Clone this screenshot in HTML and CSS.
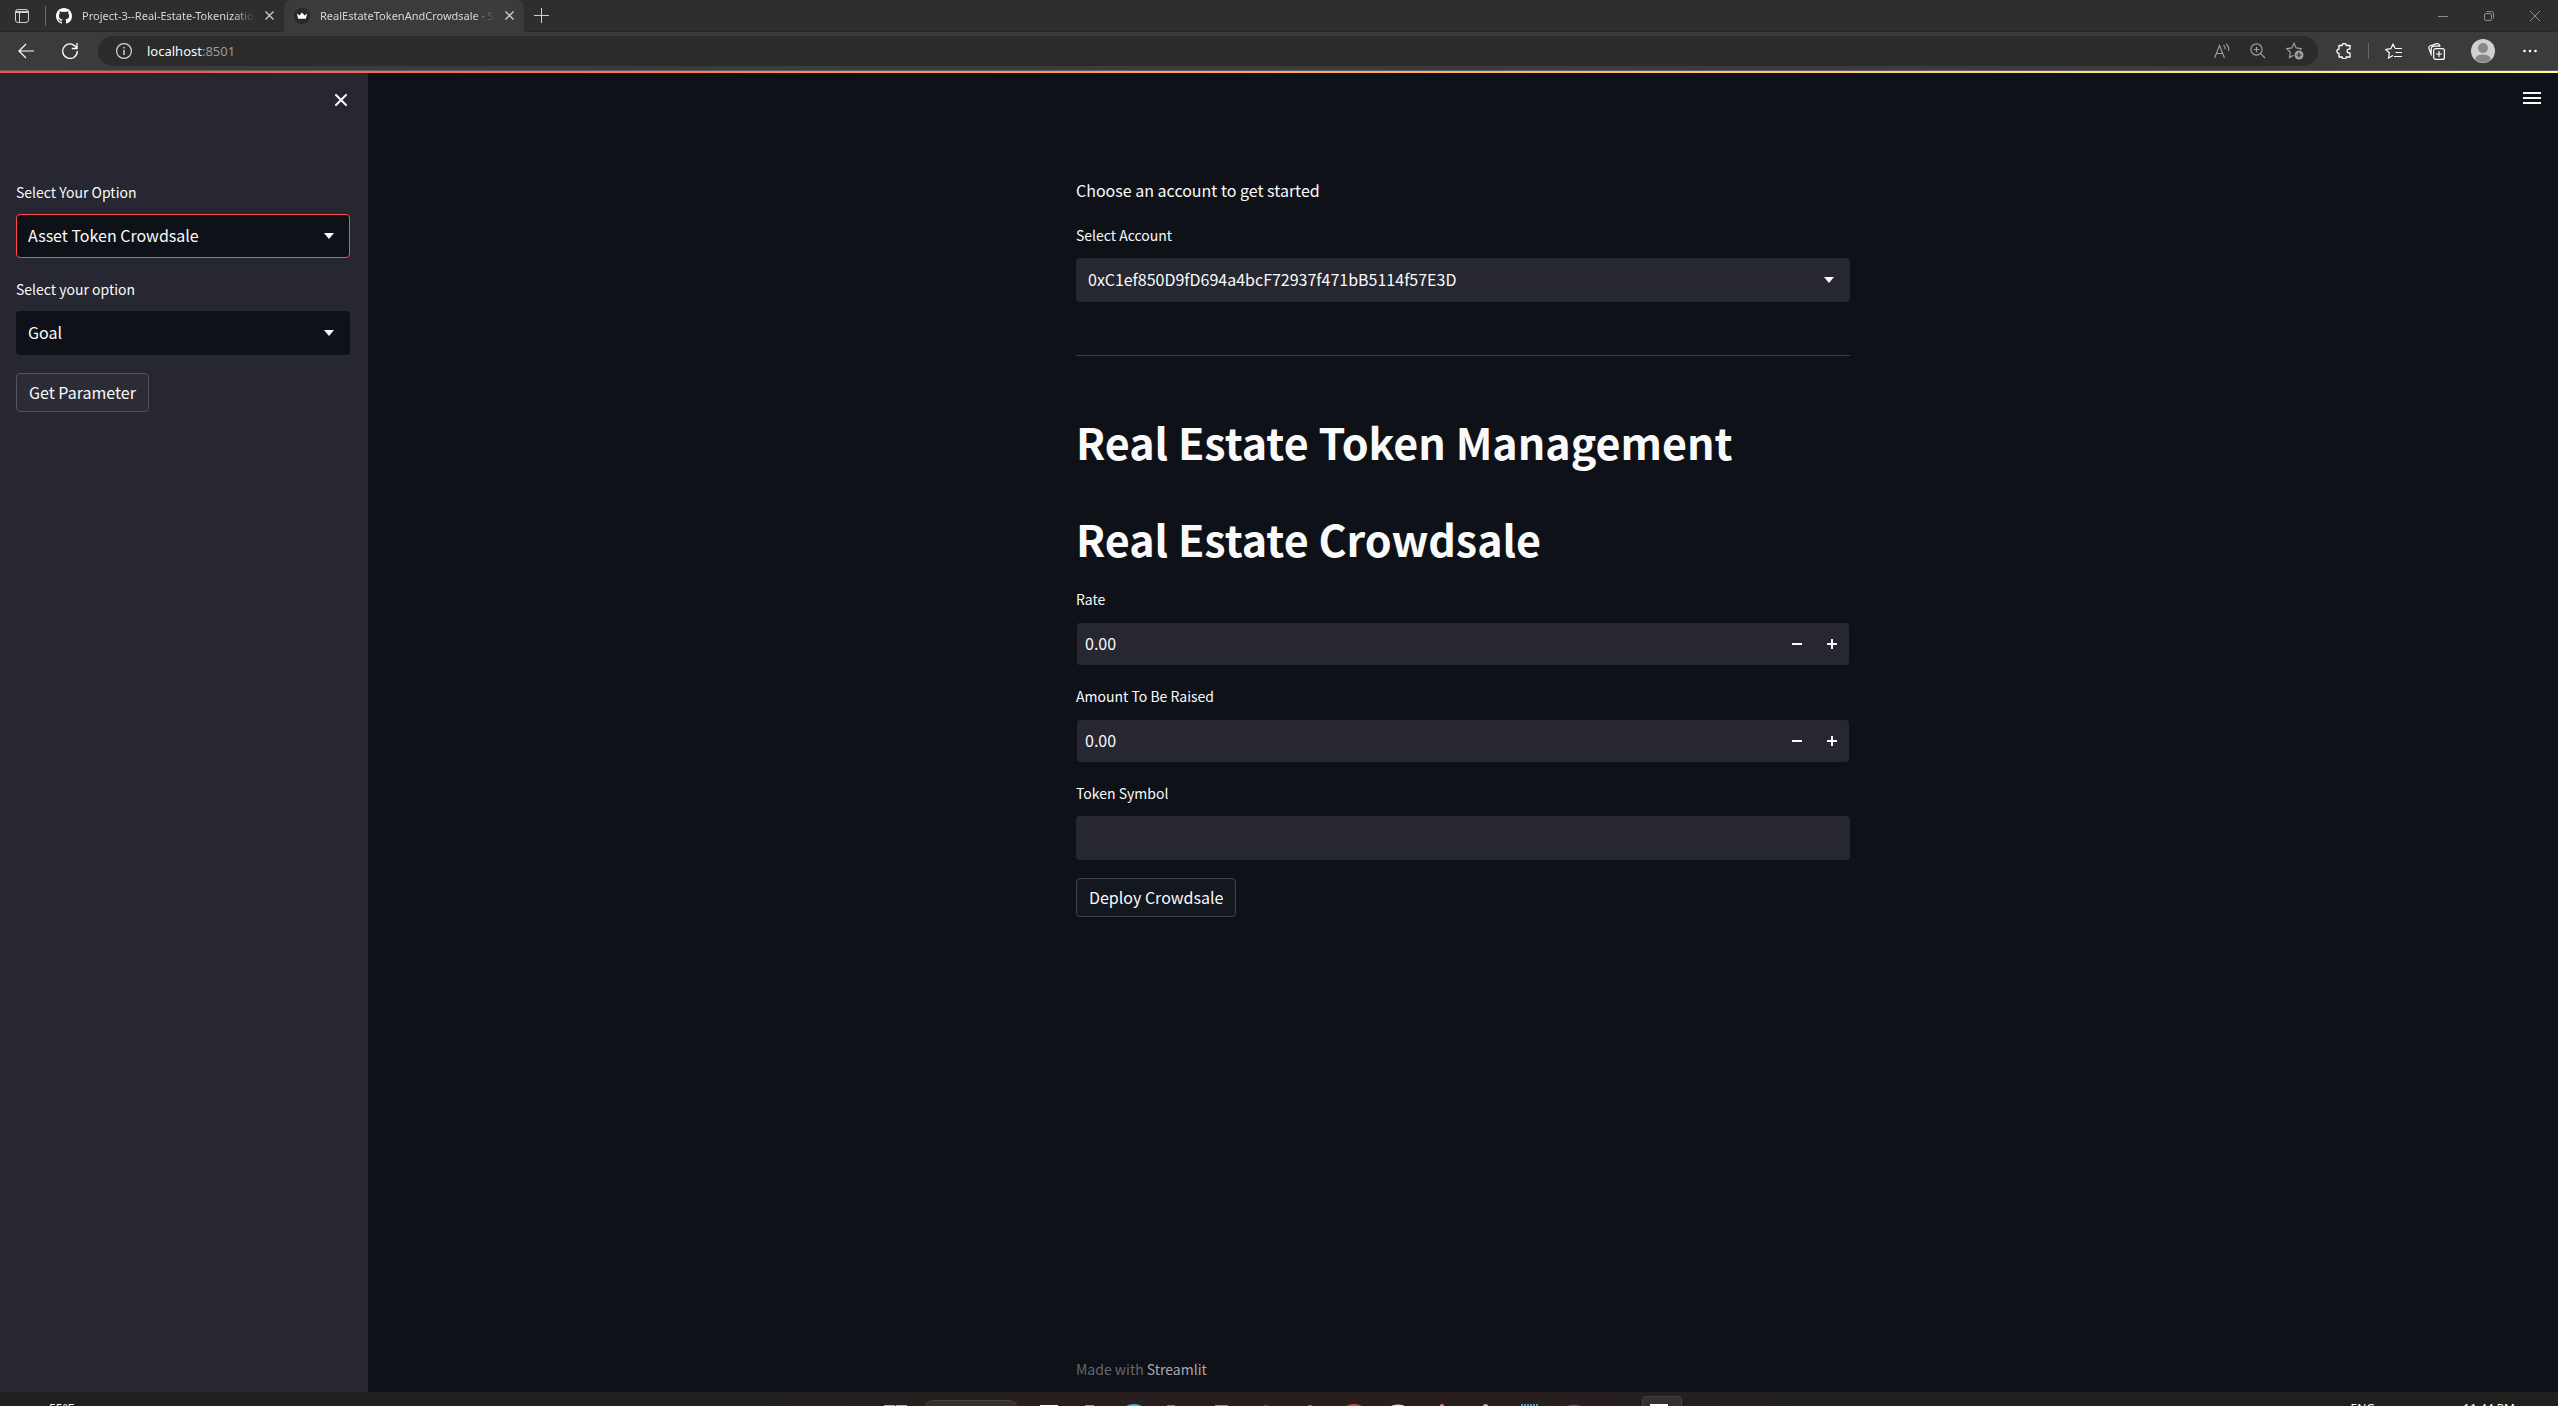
FILE: index.html
```html
<!DOCTYPE html>
<html lang="en">
<head>
<meta charset="utf-8">
<title>RealEstateTokenAndCrowdsale · Streamlit</title>
<link rel="stylesheet" href="styles.css">
</head>
<body>
<header class="browser">
  <div class="tabstrip">
    <button class="chrome-btn tab-actions" aria-label="Tab actions menu">
      <svg width="14" height="14" viewBox="0 0 14 14" fill="none" stroke="#d0d0d0"><rect x=".5" y=".5" width="13" height="13" rx="2.5"/><path d="M1 2.500h12M1 3.500h12M4.500 4v9.500"/></svg>
    </button>
    <div class="tab">
      <svg width="16" height="16" viewBox="0 0 16 16" fill="#fff"><path d="M8 0C3.580 0 0 3.580 0 8c0 3.540 2.290 6.530 5.470 7.590.4.070.55-.17.55-.38 0-.19-.01-.82-.01-1.490-2.010.37-2.530-.49-2.690-.94-.09-.23-.48-.94-.82-1.130-.28-.15-.68-.52-.01-.53.63-.01 1.080.58 1.230.82.72 1.210 1.870.87 2.330.66.070-.52.28-.87.51-1.070-1.780-.2-3.640-.89-3.640-3.950 0-.87.31-1.590.82-2.150-.08-.2-.36-1.020.08-2.120 0 0 .67-.21 2.200.82.64-.18 1.320-.27 2-.27s1.360.09 2 .27c1.530-1.040 2.200-.82 2.200-.82.44 1.100.16 1.920.08 2.120.51.56.82 1.270.82 2.150 0 3.070-1.870 3.750-3.650 3.950.29.25.54.73.54 1.480 0 1.070-.01 1.930-.01 2.200 0 .21.15.46.55.38A8.010 8.010 0 0 0 16 8c0-4.420-3.580-8-8-8z"/></svg>
      <span class="tab-title">Project-3--Real-Estate-Tokenization</span>
      <button class="chrome-btn" aria-label="Close tab"><svg width="9" height="9" viewBox="0 0 9 9" stroke="#d0d0d0" stroke-width="1.300"><path d="M.5.5l8 8M8.500.5l-8 8"/></svg></button>
    </div>
    <div class="tab tab-active">
      <svg width="16" height="16" viewBox="0 0 16 16"><circle cx="8" cy="8" r="8" fill="#262730"/><path d="M2.800 5.500l2.700 2L8 4.500l2.500 3 2.700-2-1.400 5.300H4.200z" fill="#fff"/></svg>
      <span class="tab-title">RealEstateTokenAndCrowdsale · Streamlit</span>
      <button class="chrome-btn" aria-label="Close tab"><svg width="9" height="9" viewBox="0 0 9 9" stroke="#d0d0d0" stroke-width="1.300"><path d="M.5.5l8 8M8.500.5l-8 8"/></svg></button>
    </div>
    <button class="chrome-btn new-tab" aria-label="New tab"><svg width="15" height="15" viewBox="0 0 15 15" stroke="#d0d0d0"><path d="M7.500 0v15M0 7.500h15"/></svg></button>
    <div class="window-controls">
      <button class="chrome-btn" aria-label="Minimize"><svg width="10" height="10" viewBox="0 0 10 10" stroke="#8c8c8c"><path d="M0 5.500h10"/></svg></button>
      <button class="chrome-btn" aria-label="Restore"><svg width="10" height="10" viewBox="0 0 10 10" fill="none" stroke="#8c8c8c"><rect x=".5" y="2.500" width="7" height="7" rx="1.500"/><path d="M2.500.5h5a2 2 0 0 1 2 2v5"/></svg></button>
      <button class="chrome-btn" aria-label="Close"><svg width="10" height="10" viewBox="0 0 10 10" stroke="#8c8c8c"><path d="M0 0l10 10M10 0L0 10"/></svg></button>
    </div>
  </div>
  <div class="toolbar">
    <button class="chrome-btn back" aria-label="Back"><svg width="16" height="16" viewBox="0 0 16 16" fill="none" stroke="#fff" stroke-width="1.200"><path d="M16 8H1M8 1L1 8l7 7"/></svg></button>
    <button class="chrome-btn reload" aria-label="Refresh"><svg width="16" height="16" viewBox="0 0 16 16" fill="none" stroke="#fff" stroke-width="1.300"><path d="M14.800 5.500A7.300 7.300 0 1 0 15.300 8M15 0v5.500H9.800"/></svg></button>
    <div class="address">
      <svg width="16" height="16" viewBox="0 0 16 16" fill="none" stroke="#d8d8d8"><circle cx="8" cy="8" r="7.400" stroke-width="1.200"/><path d="M8 7v5M8 4v1.600" stroke-width="1.400"/></svg>
      <span class="url">localhost<span class="port">:8501</span></span>
      <div class="address-actions">
        <svg width="16" height="16" viewBox="0 0 16 16" fill="none" stroke="#a0a0a0" stroke-width="1.100"><path d="M.6 15L5.500 2.500l5 12.500M2.300 10.500h6.500M9.500 2.200q2 1.500 1.500 4M12 .6q3.500 3 2.500 7"/></svg>
        <svg width="16" height="16" viewBox="0 0 16 16" fill="none" stroke="#a0a0a0" stroke-width="1.200"><circle cx="6.500" cy="6.500" r="5.600"/><path d="M10.700 10.700L15 15M3.700 6.500h5.600M6.500 3.700v5.600"/></svg>
        <svg width="18" height="18" viewBox="0 0 18 18" fill="none" stroke="#a0a0a0" stroke-width="1.200"><path d="M7.500 13.200L3.500 15.500l.8-5.200L.8 6.600l5-.7L8 1.300l2.200 4.600 5 .7-1.200 1.300"/><circle cx="13" cy="13" r="4.500" fill="#a0a0a0" stroke="none"/><path d="M13 10.500v5M10.500 13h5" stroke="#2b2b2b"/></svg>
      </div>
    </div>
    <div class="toolbar-actions">
      <button class="chrome-btn" aria-label="Extensions"><svg width="16" height="16" viewBox="0 0 16 16" fill="none" stroke="#fff" stroke-width="1.300" stroke-linejoin="round"><path d="M3 2.500h3.200a2 2 0 0 1 4 0h3.800v3.600h-1a1.900 1.900 0 0 0 0 3.800h1V14h-3.800a2 2 0 0 1-4 0H3v-3.600a2.100 2.100 0 0 1 0-4.200z"/></svg></button>
      <span class="divider"></span>
      <button class="chrome-btn" aria-label="Favorites"><svg width="17" height="16" viewBox="0 0 17 16" fill="none" stroke="#fff" stroke-width="1.200"><path d="M8 12.500L3.500 15l.9-5L.8 6.500l5-.8L8 1.200l2 4M10 5.500h7M10.500 9.500H17M9 13.500h8"/></svg></button>
      <button class="chrome-btn" aria-label="Collections"><svg width="17" height="17" viewBox="0 0 17 17" fill="none" stroke="#fff" stroke-width="1.200"><rect x="5.700" y="5.700" width="10.700" height="10.700" rx="2"/><path d="M11 8v6M8 11h6M3.500 12.500L1 5.500q-.6-2 1.300-2.700l6.500-2.100q1.800-.4 2.600 1.200l.8 1.500M3.200 10.500V6q0-2.800 2.800-2.800h6"/></svg></button>
      <button class="chrome-btn" aria-label="Profile"><svg width="24" height="24" viewBox="0 0 24 24"><circle cx="12" cy="12" r="12" fill="#d2d0ce"/><circle cx="12" cy="9" r="5" fill="#8a8886"/><path d="M4 20.500q1-5 8-5t8 5A12 12 0 0 1 4 20.500z" fill="#8a8886"/></svg></button>
      <button class="chrome-btn more" aria-label="Settings and more"><svg width="14" height="4" viewBox="0 0 14 4" fill="#fff"><circle cx="1.500" cy="2" r="1.300"/><circle cx="7" cy="2" r="1.300"/><circle cx="12.500" cy="2" r="1.300"/></svg></button>
    </div>
  </div>
</header>

<div class="app">
  <div class="decoration"></div>
  <aside class="sidebar">
    <button class="icon-btn close-sidebar" aria-label="Close sidebar"><svg width="12" height="12" viewBox="0 0 12 12" fill="none" stroke="#fafafa" stroke-width="2" stroke-linecap="round"><path d="M1 1l10 10M11 1L1 11"/></svg></button>
    <div class="field">
      <label for="page">Select Your Option</label>
      <div class="select focused">
        <select id="page"><option>Asset Token Crowdsale</option></select>
        <svg width="10" height="6" viewBox="0 0 10 6" fill="#fafafa"><path d="M0 0h10L5 6z"/></svg>
      </div>
    </div>
    <div class="field">
      <label for="param">Select your option</label>
      <div class="select">
        <select id="param"><option>Goal</option></select>
        <svg width="10" height="6" viewBox="0 0 10 6" fill="#fafafa"><path d="M0 0h10L5 6z"/></svg>
      </div>
    </div>
    <button class="btn">Get Parameter</button>
  </aside>

  <main class="main">
    <button class="icon-btn app-menu" aria-label="Main menu"><svg width="18" height="12" viewBox="0 0 18 12" fill="#fafafa"><path d="M0 0h18v2H0zM0 5h18v2H0zM0 10h18v2H0z"/></svg></button>
    <div class="column">
      <p class="intro">Choose an account to get started</p>
      <div class="field">
        <label for="account">Select Account</label>
        <div class="select">
          <select id="account"><option>0xC1ef850D9fD694a4bcF72937f471bB5114f57E3D</option></select>
          <svg width="10" height="6" viewBox="0 0 10 6" fill="#fafafa"><path d="M0 0h10L5 6z"/></svg>
        </div>
      </div>
      <hr>
      <h1>Real Estate Token Management</h1>
      <h1>Real Estate Crowdsale</h1>
      <div class="field">
        <label for="rate">Rate</label>
        <div class="number">
          <input id="rate" type="text" inputmode="decimal" value="0.00">
          <button aria-label="Decrease rate"><svg width="10" height="10" viewBox="0 0 10 10" fill="#fafafa"><path d="M0 4h10v2H0z"/></svg></button>
          <button aria-label="Increase rate"><svg width="10" height="10" viewBox="0 0 10 10" fill="#fafafa"><path d="M0 4h4V0h2v4h4v2H6v4H4V6H0z"/></svg></button>
        </div>
      </div>
      <div class="field">
        <label for="amount">Amount To Be Raised</label>
        <div class="number">
          <input id="amount" type="text" inputmode="decimal" value="0.00">
          <button aria-label="Decrease amount"><svg width="10" height="10" viewBox="0 0 10 10" fill="#fafafa"><path d="M0 4h10v2H0z"/></svg></button>
          <button aria-label="Increase amount"><svg width="10" height="10" viewBox="0 0 10 10" fill="#fafafa"><path d="M0 4h4V0h2v4h4v2H6v4H4V6H0z"/></svg></button>
        </div>
      </div>
      <div class="field">
        <label for="symbol">Token Symbol</label>
        <input id="symbol" class="text" type="text">
      </div>
      <button class="btn btn-main">Deploy Crowdsale</button>
      <footer>Made with <a href="#">Streamlit</a></footer>
    </div>
  </main>
</div>

<div class="taskbar">
  <span class="weather">55°F</span>
  <svg width="806" height="14" viewBox="0 0 806 14">
    <path d="M8 13h11v1H8zM20 13h11v1H20z" fill="#6cc9ee"/>
    <path d="M49 16q1-7.500 9-7.500h74q8 0 9 7.500" fill="#352e2d" stroke="#454140"/>
    <path d="M164 13h18v1h-18z" fill="#fff"/>
    <path d="M209 13h9v1h-9z" fill="#9b86c4"/>
    <ellipse cx="258" cy="15" rx="8" ry="3" fill="#2fb9cf"/>
    <path d="M291 13h8v1h-8z" fill="#a8781c"/>
    <path d="M339 13h13v1h-13z" fill="#33b1e0"/>
    <path d="M388 13h4v1h-4z" fill="#1b5f9e"/>
    <path d="M432 13h4v1h-4z" fill="#4a82d6"/>
    <ellipse cx="478" cy="15" rx="8" ry="3" fill="#e0402f"/>
    <ellipse cx="522" cy="15" rx="7" ry="2.500" fill="#e0e0e0"/>
    <path d="M564 14v-1l1-1h2l1 1v1z" fill="#ee7268"/>
    <path d="M607 14v-1l2-1h1l2 1v1z" fill="#e0b080"/>
    <path d="M645 13h18" stroke="#3aa6cc" stroke-width="2" stroke-dasharray="2 1"/>
    <ellipse cx="698" cy="15" rx="7" ry="2.500" fill="#7a3394"/>
    <path d="M766.500 14V7.500q0-3 3-3h33q3 0 3 3V14" fill="#34302f" stroke="#45413f"/>
    <path d="M774 12h18v2h-18z" fill="#fff"/>
  </svg>
  <div class="tray">
    <span>ENG</span>
    <span class="clock">11:44 PM</span>
  </div>
</div>
</body>
</html>
```
FILE: styles.css
```css
* { box-sizing: border-box; }

body {
  margin: 0;
  height: 100vh;
  display: flex;
  flex-direction: column;
  overflow: hidden;
  background: #0e1117;
  color: #fafafa;
  font: 16px/28px "Noto Sans CJK SC", sans-serif;
}

button, input, select { font: inherit; color: inherit; margin: 0; }
svg { display: block; flex: none; }
p, h1, hr { margin: 0; }

/* Browser frame */
.browser { font-family: "Noto Sans", sans-serif; background: #3b3b3b; }
.chrome-btn { display: flex; padding: 0; border: 0; background: none; }

.tabstrip {
  display: flex;
  align-items: center;
  height: 32px;
  background: #2e2e2e;
  border-bottom: 1px solid #272727;
}
.tab-actions { padding: 0 16px 0 15px; }
.tab {
  display: flex;
  align-items: center;
  gap: 10px;
  width: 239px;
  height: 20px;
  padding: 0 10px;
  border-left: 1px solid #6e6e6e;
  font-size: 11px;
  line-height: 20px;
  color: #d6d6d6;
}
.tab-active {
  width: 240px;
  height: 32px;
  border: 0;
  border-radius: 8px 8px 0 0;
  background: #3b3b3b;
}
.tab-title {
  flex: 1;
  min-width: 0;
  overflow: hidden;
  white-space: nowrap;
  mask-image: linear-gradient(90deg, #000 88%, transparent);
}
.new-tab { padding: 0 10px; }
.window-controls { display: flex; gap: 36px; margin-left: auto; padding-right: 18px; }

.toolbar {
  display: flex;
  align-items: center;
  height: 39px;
  padding: 0 21px 0 18px;
  border-bottom: 1px solid #5c5c5c;
}
.back { padding-right: 28px; }
.reload { padding-right: 20px; }
.address {
  flex: 1;
  display: flex;
  align-items: center;
  gap: 15px;
  height: 30px;
  padding: 0 14px 0 18px;
  border-radius: 15px;
  background: #2b2b2b;
  font-size: 13px;
  line-height: 20px;
}
.port { color: #9a9a9a; }
.address-actions { display: flex; align-items: center; gap: 20px; margin-left: auto; }
.toolbar-actions { display: flex; align-items: center; gap: 26px; padding-left: 18px; }
.divider { width: 1px; height: 16px; margin: 0 -10px; background: #666; }
.more { padding-left: 2px; }

/* Application */
.app { position: relative; flex: 1; min-height: 0; display: flex; }
.decoration {
  position: absolute;
  z-index: 1;
  inset: 0 0 auto;
  height: 2px;
  background: linear-gradient(90deg, #ff4b4b, #fffd80);
}
.icon-btn { position: absolute; padding: 4px; border: 0; background: none; }

.sidebar {
  position: relative;
  width: 368px;
  padding: 108px 18px 0 16px;
  background: #262730;
}
.close-sidebar { top: 19px; right: 17px; }

.main { position: relative; flex: 1; padding: 105px 18px 12px; }
.app-menu { top: 17px; right: 13px; }
.column {
  display: flex;
  flex-direction: column;
  max-width: 774px;
  height: 100%;
  margin: 0 auto;
}
.intro { margin-bottom: 19px; }

.field { margin-bottom: 18px; }
label { display: block; margin-bottom: 11px; font-size: 14px; line-height: 24px; }
.sidebar label { margin-bottom: 9px; line-height: 26px; }

.select {
  display: flex;
  align-items: center;
  height: 44px;
  border: 1px solid transparent;
  border-radius: 4px;
  background: #262730 border-box;
}
.select select {
  flex: 1;
  min-width: 0;
  height: 42px;
  padding: 0 38px 2px 11px;
  margin-right: -26px;
  border: 0;
  outline: 0;
  appearance: none;
  background: none;
}
.select svg { margin-right: 15px; pointer-events: none; }
.sidebar .select { background-color: #0e1117; }
.sidebar .focused { border-color: #ff4b4b; }

.number {
  display: flex;
  height: 44px;
  border: 1px solid #0e1117;
  border-radius: 4px;
  background: #262730;
}
.number input {
  flex: 1;
  min-width: 0;
  padding: 0 8px 2px;
  border: 0;
  background: none;
}
.number button {
  display: flex;
  align-items: center;
  justify-content: center;
  width: 35px;
  padding: 0;
  border: 0;
  background: none;
}
.text {
  display: block;
  width: 100%;
  height: 44px;
  padding: 0 12px;
  border: 0;
  border-radius: 4px;
  background: #262730;
}

hr { margin: 35px 0 59px; border: 0; border-top: 1px solid #3e4044; }
h1 { font-size: 43px; line-height: 52px; font-weight: 700; margin-bottom: 45px; }
h1 + h1 { margin-bottom: 23px; }

.btn {
  height: 39px;
  padding: 0 12px 2px;
  border: 1px solid #52535b;
  border-radius: 4px;
  background: #2b2c36;
  line-height: 24px;
}
.btn-main { align-self: flex-start; border-color: #41444c; background: #13171f; }

footer { margin-top: auto; font-size: 14px; line-height: 22px; color: #66686c; }
footer a { color: #a8a9ac; text-decoration: none; }

/* Desktop taskbar, cut off by the bottom of the screen */
.taskbar {
  display: grid;
  grid-template-columns: 1fr auto 1fr;
  height: 14px;
  overflow: hidden;
  background: linear-gradient(90deg, #22201e 30%, #281e1e 42%, #281e1e 60%, #22201f 70%);
  font: 12px/16px "Noto Sans", sans-serif;
  color: #fff;
}
.weather { padding: 9px 0 0 49px; }
.tray {
  display: flex;
  justify-content: flex-end;
  gap: 88px;
  padding: 9px 43px 0 0;
}
```
